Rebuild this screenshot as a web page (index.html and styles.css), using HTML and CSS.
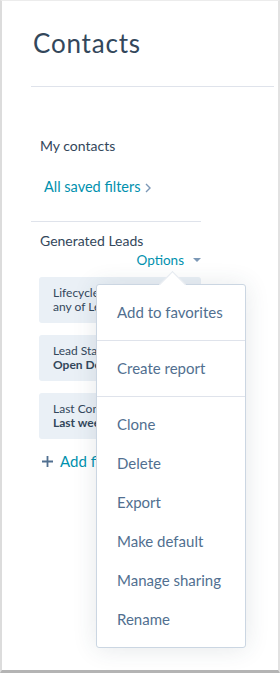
FILE: index.html
```
<!DOCTYPE html>
<html lang="en">
<head>
  <meta charset="UTF-8">
  <meta name="viewport" content="width=device-width, initial-scale=1.0">
  <title>Contacts</title>
  <link rel="stylesheet" href="styles.css">
</head>
<body>
  <div class="frame">

    <!-- Page header -->
    <div class="header">
      <h1 class="title">Contacts</h1>
    </div>

    <!-- Sidebar with saved filters -->
    <div class="sidebar">
      <div class="section-label">My contacts</div>
      <a class="saved-link" href="#">All saved filters
        <svg class="chevron" width="6" height="10" viewBox="0 0 6 10"><path d="M1 1 L5 5 L1 9" fill="none" stroke="#7c98b6" stroke-width="1.4"/></svg>
      </a>

      <div class="view">
        <div class="view-name">Generated Leads</div>
        <div class="view-options">
          <span class="options-link">Options</span>
          <span class="options-caret"></span>
        </div>

        <div class="filters">
          <div class="filter-card">
            <div class="filter-line">Lifecycle stage is</div>
            <div class="filter-line">any of Lead</div>
          </div>
          <div class="filter-card">
            <div class="filter-line">Lead Status is</div>
            <div class="filter-line bold">Open Deal</div>
          </div>
          <div class="filter-card">
            <div class="filter-line">Last Contacted</div>
            <div class="filter-line bold">Last week</div>
          </div>
        </div>

        <div class="add-filter">
          <svg class="plus" width="11" height="11" viewBox="0 0 11 11"><path d="M5.5 0 V11 M0 5.5 H11" stroke="#516f90" stroke-width="1.8"/></svg>
          <span>Add filter</span>
        </div>
      </div>
    </div>

    <!-- Options dropdown -->
    <div class="dropdown">
      <div class="dropdown-section">
        <div class="dropdown-item">Add to favorites</div>
      </div>
      <div class="dropdown-section">
        <div class="dropdown-item">Create report</div>
      </div>
      <div class="dropdown-section">
        <div class="dropdown-item">Clone</div>
        <div class="dropdown-item">Delete</div>
        <div class="dropdown-item">Export</div>
        <div class="dropdown-item">Make default</div>
        <div class="dropdown-item">Manage sharing</div>
        <div class="dropdown-item">Rename</div>
      </div>
    </div>

  </div>
</body>
</html>
```

FILE: styles.css
```
* {
  margin: 0;
  padding: 0;
  box-sizing: border-box;
}

body {
  background-color: #fff;
  font-family: Lato, "Open Sans", sans-serif;
  color: #33475b;
}

.frame {
  position: relative;
  width: 280px;
  height: 673px;
  border-top: 1px solid #ececec;
  border-left: 2px solid #dcdcdc;
  border-right: 2px solid #e2e2e2;
  border-bottom: 3px solid #b4b4b4;
  overflow: hidden;
}

/* Header */
.header {
  margin-left: 29px;
  margin-right: 4px;
  padding-top: 25px;
  height: 86px;
  border-bottom: 1px solid #dfe3eb;
}

.title {
  font-size: 26px;
  font-weight: 400;
  letter-spacing: 0.8px;
  line-height: 34px;
  padding-left: 2px;
}

/* Sidebar */
.sidebar {
  width: 170px;
  margin-left: 29px;
  padding-top: 50px;
}

.section-label {
  padding-left: 9px;
  font-size: 14px;
  line-height: 18px;
}

.saved-link {
  display: flex;
  align-items: center;
  gap: 4px;
  margin-top: 22px;
  padding-left: 13px;
  font-size: 14.5px;
  line-height: 20px;
  color: #0091ae;
  text-decoration: none;
}

.chevron {
  margin-top: 1px;
}

.view {
  margin-top: 24px;
  border-top: 1px solid #dfe3eb;
  padding-top: 10px;
}

.view-name {
  padding-left: 9px;
  font-size: 14px;
  line-height: 18px;
}

.view-options {
  display: flex;
  justify-content: flex-end;
  align-items: center;
  gap: 9px;
  padding-right: 0;
  margin-top: 1px;
  height: 18px;
}

.options-link {
  font-size: 13.5px;
  color: #0091ae;
}

.options-caret {
  width: 0;
  height: 0;
  border-left: 4px solid transparent;
  border-right: 4px solid transparent;
  border-top: 4px solid #7c98b6;
}

.filters {
  display: flex;
  flex-direction: column;
  gap: 12px;
  margin-top: 8px;
  margin-left: 8px;
}

.filter-card {
  width: 162px;
  height: 46px;
  background-color: #eaf0f6;
  border-radius: 3px;
  padding: 9px 14px;
  overflow: hidden;
  white-space: nowrap;
}

.filter-line {
  font-size: 12px;
  line-height: 14px;
}

.filter-line.bold {
  font-weight: 700;
}

.add-filter {
  display: flex;
  align-items: center;
  gap: 7px;
  margin-top: 13px;
  margin-left: 11px;
  font-size: 15px;
  color: #0091ae;
  white-space: nowrap;
}

/* Dropdown menu over the filters */
.dropdown {
  position: absolute;
  top: 283px;
  left: 94px;
  width: 150px;
  background-color: #fff;
  border: 1px solid #cbd6e2;
  border-radius: 3px;
  box-shadow: 0 1px 24px 0 rgba(45, 62, 80, 0.12);
}

.dropdown::before {
  content: '';
  position: absolute;
  top: -10px;
  left: 66px;
  width: 18px;
  height: 18px;
  background-color: #fff;
  border-top: 1px solid #e5eaf0;
  border-left: 1px solid #e5eaf0;
  transform: rotate(45deg);
}

.dropdown-section {
  padding: 8px 0;
  border-bottom: 1px solid #dfe3eb;
}

.dropdown-section:last-child {
  border-bottom: none;
}

.dropdown-item {
  height: 39px;
  line-height: 39px;
  padding-left: 20px;
  font-size: 15px;
  color: #516f90;
}
```
